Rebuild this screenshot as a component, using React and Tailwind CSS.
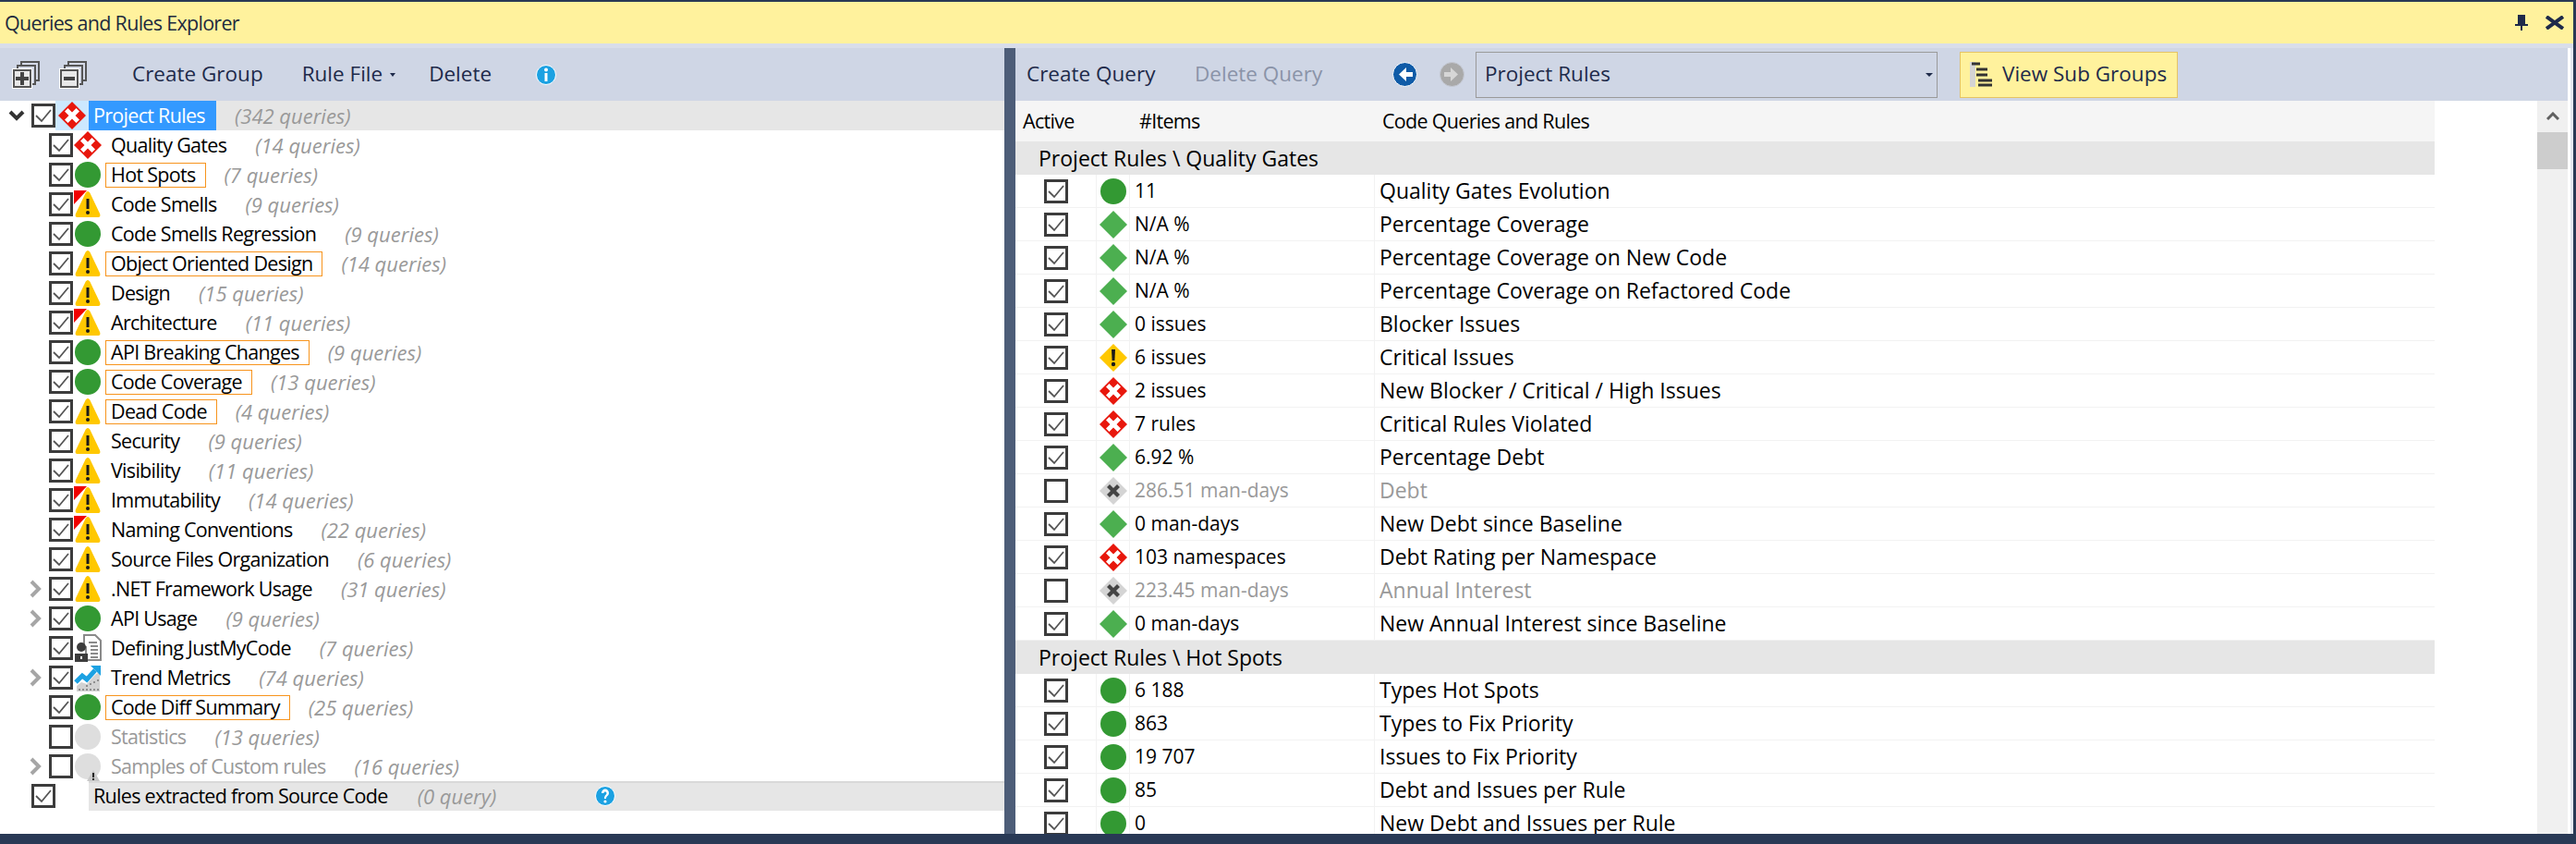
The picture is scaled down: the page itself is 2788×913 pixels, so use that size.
import { Fragment } from "react";

const treeRows = [
  { name: "Quality Gates", count: "(14 queries)", icon: "redDiamond" },
  { name: "Hot Spots", count: "(7 queries)", icon: "green", boxed: true },
  { name: "Code Smells", count: "(9 queries)", icon: "warnFlag" },
  { name: "Code Smells Regression", count: "(9 queries)", icon: "green" },
  { name: "Object Oriented Design", count: "(14 queries)", icon: "warn", boxed: true },
  { name: "Design", count: "(15 queries)", icon: "warn" },
  { name: "Architecture", count: "(11 queries)", icon: "warnFlag" },
  { name: "API Breaking Changes", count: "(9 queries)", icon: "green", boxed: true },
  { name: "Code Coverage", count: "(13 queries)", icon: "green", boxed: true },
  { name: "Dead Code", count: "(4 queries)", icon: "warn", boxed: true },
  { name: "Security", count: "(9 queries)", icon: "warn" },
  { name: "Visibility", count: "(11 queries)", icon: "warn" },
  { name: "Immutability", count: "(14 queries)", icon: "warnFlag" },
  { name: "Naming Conventions", count: "(22 queries)", icon: "warnFlag" },
  { name: "Source Files Organization", count: "(6 queries)", icon: "warn" },
  { name: ".NET Framework Usage", count: "(31 queries)", icon: "warn", arrow: true },
  { name: "API Usage", count: "(9 queries)", icon: "green", arrow: true },
  { name: "Defining JustMyCode", count: "(7 queries)", icon: "doc" },
  { name: "Trend Metrics", count: "(74 queries)", icon: "trend", arrow: true },
  { name: "Code Diff Summary", count: "(25 queries)", icon: "green", boxed: true },
  { name: "Statistics", count: "(13 queries)", icon: "gray", off: true },
  { name: "Samples of Custom rules", count: "(16 queries)", icon: "grayWarn", off: true, arrow: true },
];

const sections = [
  {
    title: "Project Rules \\ Quality Gates",
    rows: [
      ["green", "11", "Quality Gates Evolution"],
      ["greenDiamond", "N/A %", "Percentage Coverage"],
      ["greenDiamond", "N/A %", "Percentage Coverage on New Code"],
      ["greenDiamond", "N/A %", "Percentage Coverage on Refactored Code"],
      ["greenDiamond", "0 issues", "Blocker Issues"],
      ["yellowDiamond", "6 issues", "Critical Issues"],
      ["redDiamond", "2 issues", "New Blocker / Critical / High Issues"],
      ["redDiamond", "7 rules", "Critical Rules Violated"],
      ["greenDiamond", "6.92 %", "Percentage Debt"],
      ["grayDiamond", "286.51 man-days", "Debt", true],
      ["greenDiamond", "0 man-days", "New Debt since Baseline"],
      ["redDiamond", "103 namespaces", "Debt Rating per Namespace"],
      ["grayDiamond", "223.45 man-days", "Annual Interest", true],
      ["greenDiamond", "0 man-days", "New Annual Interest since Baseline"],
    ],
  },
  {
    title: "Project Rules \\ Hot Spots",
    rows: [
      ["green", "6 188", "Types Hot Spots"],
      ["green", "863", "Types to Fix Priority"],
      ["green", "19 707", "Issues to Fix Priority"],
      ["green", "85", "Debt and Issues per Rule"],
      ["green", "0", "New Debt and Issues per Rule"],
    ],
  },
];

function StatusIcon({ type }) {
  const diamond = "M15 0 L30 15 L15 30 L0 15 Z";
  return (
    <svg width="30" height="30" viewBox="0 0 30 30" className="shrink-0 overflow-visible">
      {type === "green" && <circle cx="15" cy="15" r="14" fill="#339933" />}
      {type === "gray" && <circle cx="15" cy="15" r="14" fill="#dedede" />}
      {type === "grayWarn" && (
        <>
          <circle cx="15" cy="15" r="14" fill="#dedede" />
          <path d="M21 19 L28 31 L14 31 Z" fill="#c8c8c8" />
          <path d="M20 22 h2 v5 h-2 z M20 28 h2 v2 h-2 z" fill="#222" />
        </>
      )}
      {type === "greenDiamond" && <path d={diamond} fill="#4caf50" />}
      {type === "yellowDiamond" && (
        <>
          <path d={diamond} fill="#ffc800" />
          <path d="M13 6 h4 l-.6 12 h-2.8 z" fill="#1a1a1a" />
          <circle cx="15" cy="22" r="2.2" fill="#1a1a1a" />
        </>
      )}
      {type === "redDiamond" && (
        <>
          <path d={diamond} fill="#e8170c" />
          <path d="M15 11.5 L19.5 7 L23 10.5 L18.5 15 L23 19.5 L19.5 23 L15 18.5 L10.5 23 L7 19.5 L11.5 15 L7 10.5 L10.5 7 Z" fill="#fff" />
        </>
      )}
      {type === "grayDiamond" && (
        <>
          <path d={diamond} fill="#d4d4d4" />
          <path d="M15 12 L19 8 L22 11 L18 15 L22 19 L19 22 L15 18 L11 22 L8 19 L12 15 L8 11 L11 8 Z" fill="#444" />
        </>
      )}
      {(type === "warn" || type === "warnFlag") && (
        <>
          <path d="M15 1 C16 1 17 2 17.5 3 L28 25 C29 28 28 29 26 29 L4 29 C2 29 1 28 2 25 L12.5 3 C13 2 14 1 15 1 Z" fill="#ffc800" />
          <path d="M13.5 9 h3 v11 h-3 z" fill="#1a1a1a" />
          <circle cx="15" cy="24" r="2" fill="#1a1a1a" />
        </>
      )}
      {type === "warnFlag" && <path d="M0 0 H14 L0 15 Z" fill="#f00000" />}
      {type === "doc" && (
        <>
          <path d="M11 1 H23 L29 7 V28 H13 V14 H11 Z" fill="#fff" stroke="#8a8a8a" strokeWidth="2" />
          <path d="M16 9 h9 M18 13 h8 M18 17 h8 M18 21 h8 M18 25 h8" stroke="#8a8a8a" strokeWidth="2" />
          <circle cx="8" cy="14" r="5" fill="#3c3c3c" />
          <path d="M1 21 H15 V30 H1 Z" fill="#3c3c3c" />
          <path d="M7 24 h2 v3 h-2 z" fill="#fff" />
        </>
      )}
      {type === "trend" && (
        <>
          <path d="M3 29 V24 L8 20 L14 22 L20 15 L24 11 L28 9 V30 H3 Z" fill="#d2d2d2" />
          <path d="M6 27 v2 M10 27 v2 M14 27 v2 M18 27 v2 M22 27 v2 M26 27 v2 M14 23 v2 M18 21 v2 M22 19 v2 M26 17 v2" stroke="#8f8f8f" strokeWidth="2" />
          <path d="M2 20 L9 13 L14 17 L23 7" fill="none" stroke="#1ba1e2" strokeWidth="5" />
          <path d="M18 2 H29 V13 Z" fill="#1ba1e2" />
        </>
      )}
    </svg>
  );
}

function CheckBox({ checked }) {
  return (
    <div className="w-[26px] h-[26px] shrink-0 border-[3px] border-[#3c3c3c] bg-white flex items-center justify-center">
      {checked && (
        <svg width="20" height="20" viewBox="0 0 20 20">
          <path d="M2 10 L8 16 L18 4" fill="none" stroke="#555" strokeWidth="1.8" />
        </svg>
      )}
    </div>
  );
}

function TreeRow({ row }) {
  return (
    <div className="flex h-8 items-center">
      <div className="w-[53px] shrink-0 pl-[32px]">
        {row.arrow && (
          <svg width="13" height="20" viewBox="0 0 13 20" className="block">
            <path d="M2 2 L10 10 L2 18" fill="none" stroke="#a6a6a6" strokeWidth="4" />
          </svg>
        )}
      </div>
      <CheckBox checked={!row.off} />
      <div className="ml-[1px] w-[30px] shrink-0 flex justify-center">
        <StatusIcon type={row.icon} />
      </div>
      <div
        className={`ml-[4px] h-[27px] flex items-center pl-[5px] pr-[10px] whitespace-nowrap border text-[21.5px] tracking-[-0.7px] ${
          row.boxed ? "border-[#f7941d]" : "border-transparent"
        } ${row.off ? "text-[#999999]" : "text-black"}`}
      >
        {row.name}
      </div>
      <span className="ml-[20px] italic text-[22px] text-[#999999] whitespace-nowrap">{row.count}</span>
    </div>
  );
}

function ExpandIcon({ minus }) {
  return (
    <svg width="32" height="32" viewBox="0 0 32 32" className="shrink-0">
      <path d="M10 1 H31 V23 H10 Z" fill="#fff" />
      <path d="M11 2 H30 V22 H11 Z" fill="#d4d9e6" stroke="#555" strokeWidth="2" />
      <path d="M6 5 H27 V27 H6 Z" fill="#fff" />
      <path d="M7 6 H26 V26 H7 Z" fill="#d4d9e6" stroke="#555" strokeWidth="2" />
      <path d="M1 9 H23 V31 H1 Z" fill="#fff" />
      <path d="M3 11 H21 V29 H3 Z" fill="#e8e8e8" stroke="#555" strokeWidth="2" />
      {minus ? (
        <path d="M6 18 H18 V22 H6 Z" fill="#444" />
      ) : (
        <path d="M10 13 H14 V18 H19 V22 H14 V27 H10 V22 H5 V18 H10 Z" fill="#444" />
      )}
    </svg>
  );
}

function RoundIcon({ width = 22, color, children }) {
  return (
    <svg width={width} height={width} viewBox="0 0 22 22" className="shrink-0">
      <circle cx="11" cy="11" r="10.5" fill={color} stroke="#fff" strokeWidth="1" />
      {children}
    </svg>
  );
}

function NavArrow({ back, disabled }) {
  const color = disabled ? "#a9a9a9" : "#0f5ba7";
  return (
    <svg width="27" height="27" viewBox="0 0 27 27" className="shrink-0">
      <circle cx="13.5" cy="13.5" r="13" fill={color} stroke={disabled ? "#c4c8d2" : "#fff"} strokeWidth="1" />
      <g transform={back ? "" : "translate(27 0) scale(-1 1)"}>
        <path d="M15 6 L7 13.5 L15 21 V16 H22 V11 H15 Z" fill={disabled ? "#d6d6d6" : "#fff"} />
      </g>
    </svg>
  );
}

function TableRow({ row }) {
  const [icon, value, name, off] = row;
  const tone = off ? "text-[#999999]" : "text-black";
  return (
    <div className="flex h-9 border-b border-[#f2f2f2]">
      <div className="w-[88px] shrink-0 pl-[31px] flex items-center border-r border-[#f2f2f2]">
        <CheckBox checked={!off} />
      </div>
      <div className="w-[36px] shrink-0 flex items-center justify-center border-r border-[#f2f2f2]">
        <StatusIcon type={icon} />
      </div>
      <div className={`w-[265px] shrink-0 pl-[5px] flex items-center border-r border-[#f2f2f2] whitespace-nowrap ${tone}`}>
        {value}
      </div>
      <div className={`flex-1 pl-[5px] flex items-center whitespace-nowrap text-[23px] ${tone}`}>{name}</div>
    </div>
  );
}

export default function App() {
  return (
    <div
      className="w-[2788px] h-[913px] overflow-hidden flex flex-col bg-[#293955] pt-[2px] pr-[3px] pb-[11px] text-[21px] leading-none"
      style={{ fontFamily: '"Open Sans", "Noto Sans", sans-serif' }}
    >
      {/* Title bar */}
      <div className="h-[45px] shrink-0 bg-[#fff29d] flex items-center justify-between pl-[5px] pr-[10px] text-[#1e2a3e] text-[21.5px] tracking-[-0.7px]">
        <span>Queries and Rules Explorer</span>
        <div className="flex items-center gap-[19px]">
          <svg width="14" height="17" viewBox="0 0 14 17">
            <path d="M3 0 H11 V10 H14 V12 H8 V17 H6 V12 H0 V10 H3 Z" fill="#1e2a4a" />
          </svg>
          <svg width="20" height="15" viewBox="0 0 20 15">
            <path d="M1 1 L19 14 M19 1 L1 14" stroke="#1e2a4a" strokeWidth="4" />
          </svg>
        </div>
      </div>

      <div className="flex-1 flex min-h-0 bg-[#d9deea] pt-[5px]">
        {/* Left panel */}
        <div className="w-[1087px] shrink-0 flex flex-col bg-white">
          <div className="h-[57px] shrink-0 bg-[#cfd6e5] flex items-center pl-[12px] text-[#1e2a4a] text-[22.5px]">
            <ExpandIcon />
            <div className="ml-[19px]">
              <ExpandIcon minus />
            </div>
            <span className="ml-[48px]">Create Group</span>
            <span className="ml-[42px]">Rule File</span>
            <svg width="6" height="4" viewBox="0 0 6 4" className="ml-[8px]">
              <path d="M0 0 H6 L3 4 Z" fill="#1e2a4a" />
            </svg>
            <span className="ml-[36px]">Delete</span>
            <div className="ml-[48px]">
              <RoundIcon color="#1ba1e2">
                <path d="M9.5 9 h3 v9 h-3 z" fill="#fff" />
                <circle cx="11" cy="5.5" r="2" fill="#fff" />
              </RoundIcon>
            </div>
          </div>

          {/* Root row */}
          <div className="flex h-8 items-center">
            <div className="w-[34px] shrink-0 pl-[9px]">
              <svg width="18" height="14" viewBox="0 0 18 14" className="block">
                <path d="M2 3 L9 10 L16 3" fill="none" stroke="#333" strokeWidth="4" />
              </svg>
            </div>
            <CheckBox checked />
            <div className="w-[36px] h-full shrink-0 bg-[#cce8ff] flex items-center justify-center">
              <StatusIcon type="redDiamond" />
            </div>
            <div className="h-full w-[138px] shrink-0 bg-[#3399ff] text-white flex items-center pl-[5px] whitespace-nowrap text-[21.5px] tracking-[-0.7px]">
              Project Rules
            </div>
            <div className="flex-1 h-full bg-[#e6e6e6] flex items-center pl-[20px] italic text-[22px] text-[#999999]">
              (342 queries)
            </div>
          </div>

          {treeRows.map((row) => (
            <TreeRow key={row.name} row={row} />
          ))}

          {/* Rules from source */}
          <div className="flex h-8 items-center">
            <div className="w-[34px] shrink-0" />
            <CheckBox checked />
            <div className="w-[36px] shrink-0" />
            <div className="flex-1 h-full bg-[#e6e6e6] border-t-2 border-[#d9d9d9] flex items-center pl-[5px] pb-[3px]">
              <span className="whitespace-nowrap text-black text-[21.5px] tracking-[-0.7px]">Rules extracted from Source Code</span>
              <span className="ml-[32px] italic text-[22px] text-[#999999] whitespace-nowrap">(0 query)</span>
              <div className="ml-[107px]">
                <RoundIcon color="#1ba1e2">
                  <path d="M7 8 C7 2 15 2 15 8 C15 11 12 11 12 14 H10 C10 10 12.5 10 12.5 8 C12.5 6 9.5 6 9.5 8 Z" fill="#fff" />
                  <circle cx="11" cy="17" r="1.6" fill="#fff" />
                </RoundIcon>
              </div>
            </div>
          </div>
        </div>

        {/* Splitter */}
        <div className="w-[12px] shrink-0 bg-[#4d5d78]" />

        {/* Right panel */}
        <div className="flex-1 min-w-0 flex flex-col bg-white pr-[3px] border-r-[3px] border-[#e4e7ef]">
          <div className="h-[57px] shrink-0 bg-[#cfd6e5] flex items-center pl-[12px] text-[#1e2a4a] text-[22.5px]">
            <span className="w-[182px] shrink-0 whitespace-nowrap">Create Query</span>
            <span className="w-[214px] shrink-0 whitespace-nowrap text-[#8a93a8]">Delete Query</span>
            <NavArrow back />
            <div className="ml-[24px]">
              <NavArrow disabled />
            </div>
            <div className="ml-[12px] w-[500px] h-[50px] shrink-0 border border-[#9a9a9a] flex items-center justify-between pl-[9px] pr-[4px]">
              <span>Project Rules</span>
              <svg width="8" height="4" viewBox="0 0 8 4">
                <path d="M0 0 H8 L4 4 Z" fill="#1e2a4a" />
              </svg>
            </div>
            <div className="ml-[24px] w-[236px] h-[50px] shrink-0 bg-[#fff29d] border border-[#e5c365] flex items-center pl-[9px] gap-[10px]">
              <svg width="26" height="29" viewBox="0 0 26 29">
                <path d="M1 1 V28 H7 V1 Z" fill="#d4d4d4" />
                <path d="M3 3 H12 M8 9 H20 M8 15 H20 M10 21 H25 M10 26 H25" stroke="#333" strokeWidth="3" />
              </svg>
              <span className="whitespace-nowrap">View Sub Groups</span>
            </div>
          </div>

          <div className="flex-1 min-h-0 flex overflow-hidden">
            <div className="w-[1536px] shrink-0">
              <div className="h-[44px] bg-[#f5f5f5] flex items-center whitespace-nowrap text-black text-[21.5px] tracking-[-0.7px]">
                <div className="w-[134px] shrink-0 pl-[8px]">Active</div>
                <div className="w-[263px] shrink-0">#Items</div>
                <div>Code Queries and Rules</div>
              </div>
              {sections.map((section) => (
                <Fragment key={section.title}>
                  <div className="h-9 bg-[#e6e6e6] flex items-center pl-[25px] text-black text-[23px] whitespace-nowrap">
                    {section.title}
                  </div>
                  {section.rows.map((row) => (
                    <TableRow key={row[2]} row={row} />
                  ))}
                </Fragment>
              ))}
            </div>
            <div className="flex-1" />
            {/* Scrollbar */}
            <div className="w-[33px] shrink-0 bg-[#f0f0f0] flex flex-col">
              <div className="h-[34px] flex items-center justify-center">
                <svg width="14" height="10" viewBox="0 0 14 10">
                  <path d="M1 8 L7 2 L13 8" fill="none" stroke="#606060" strokeWidth="3" />
                </svg>
              </div>
              <div className="h-[40px] bg-[#cdcdcd]" />
            </div>
          </div>
        </div>
      </div>
    </div>
  );
}
